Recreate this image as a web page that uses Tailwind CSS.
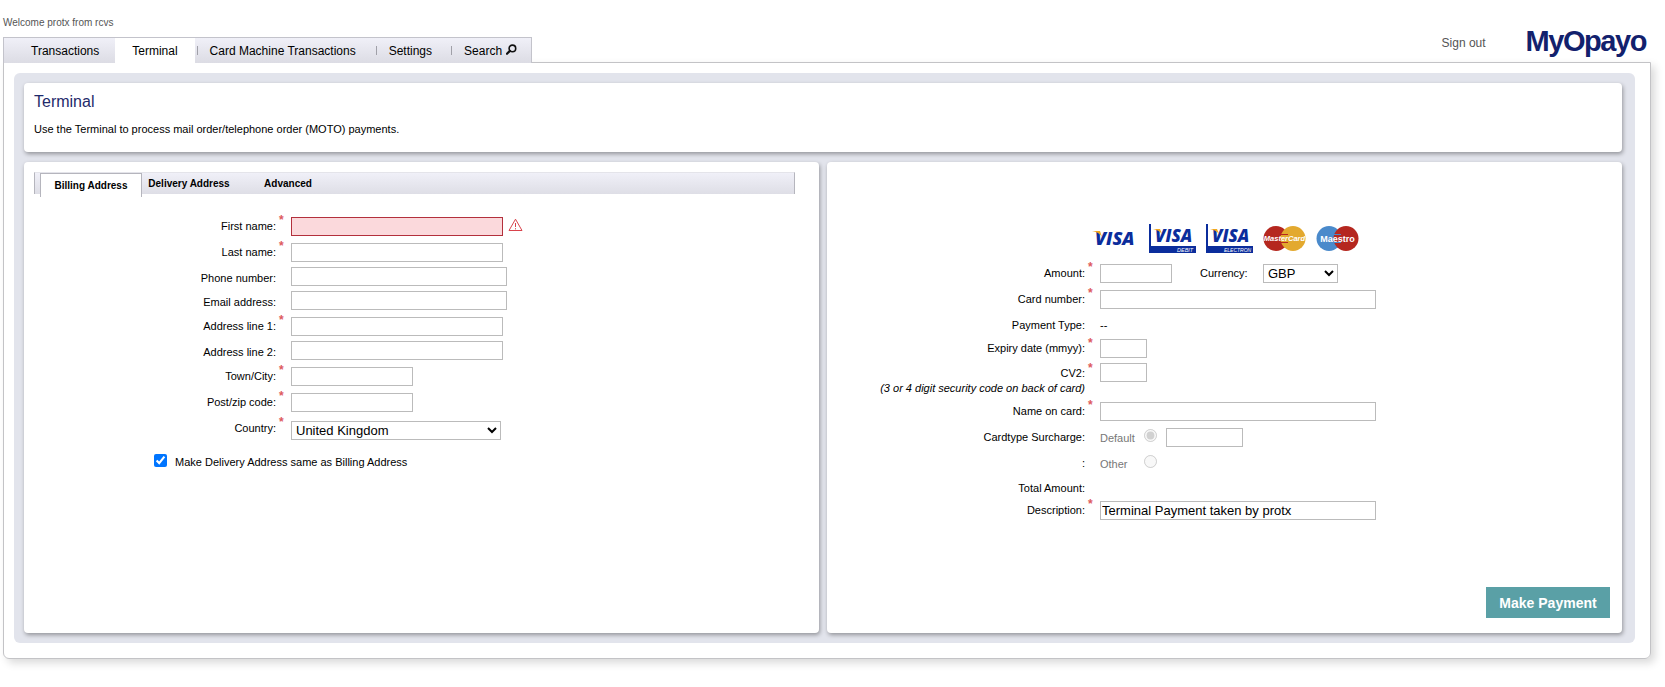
<!DOCTYPE html>
<html lang="en">
  <head>
    <meta charset="UTF-8" />
    <meta name="viewport" content="width=device-width, initial-scale=1.0" />
    <title>MyOpayo - Terminal</title>
    <script src="https://cdn.jsdelivr.net/npm/@tailwindcss/browser@4"></script>
  </head>
  <body class="bg-white pl-[3px] pr-[14px] pb-7 font-['Liberation_Sans',Arial,sans-serif] text-[11px] leading-4 text-black">
    <!-- Header -->
    <header class="relative -mb-px flex items-end justify-between">
      <div>
        <p class="pt-[15px] pb-[7px] text-[10px] leading-[15px] text-[#555]">Welcome protx from rcvs</p>
        <nav class="flex h-[26px] items-center border border-b-0 border-[#c3c3cb] bg-linear-to-b from-[#f0f0f8] to-[#dcdce4] text-[12px]">
          <a href="#" class="pl-[27px] pr-4">Transactions</a>
          <a href="#" class="flex h-full items-center bg-white px-[17px]">Terminal</a>
          <span class="ml-[2px] h-[9px] w-px bg-[#a0a0a8]"></span>
          <a href="#" class="pl-3 pr-5">Card Machine Transactions</a>
          <span class="h-[9px] w-px bg-[#a0a0a8]"></span>
          <a href="#" class="pl-3 pr-[19px]">Settings</a>
          <span class="h-[9px] w-px bg-[#a0a0a8]"></span>
          <a href="#" class="flex items-center gap-1 pl-3 pr-[14px]">
            Search
            <svg class="mb-[3px] size-[11px]" viewBox="0 0 11 11" fill="none" stroke="#111" stroke-width="1.6" stroke-linecap="round">
              <circle cx="6.4" cy="4.4" r="3.3" />
              <path d="M3.9 6.9 1 9.8" stroke-width="2.2" />
            </svg>
          </a>
        </nav>
      </div>
      <div class="flex items-center pr-[5px] pb-[6px]">
        <a href="#" class="pt-1 text-[12px] text-[#555]">Sign out</a>
        <span class="ml-10 text-[29px] leading-8 font-bold tracking-tighter text-[#12216d]">MyOpayo</span>
      </div>
    </header>

    <main class="rounded-b-md border border-[#c3c3c6] pt-[10px] pr-[15px] pb-[15px] pl-[10px] shadow-[4px_4px_8px_rgba(0,0,0,0.15)]">
      <div class="rounded-md bg-[#e2e4ec] pt-[10px] pr-[13px] pb-[10px] pl-[10px]">
        <section class="h-[69px] rounded-sm bg-white px-[10px] pt-[9px] shadow-[1px_2px_4px_rgba(0,0,0,0.35)]">
          <h1 class="text-[16px] leading-5 text-[#1f2a6b]">Terminal</h1>
          <p class="mt-[9px]">Use the Terminal to process mail order/telephone order (MOTO) payments.</p>
        </section>

        <div class="mt-[10px] grid grid-cols-2 gap-2">
          <!-- Billing address -->
          <section class="min-h-[471px] rounded-sm bg-white px-[10px] pt-[10px] shadow-[1px_2px_4px_rgba(0,0,0,0.35)]">
            <div class="mr-[14px] flex h-[22px] items-start border-x border-t border-x-[#b5b5bd] border-t-[#e4e4ea] bg-linear-to-b from-[#f0f0f8] to-[#dedee6] pl-[5px] text-[10px] font-bold">
              <button type="button" class="h-6 w-[102px] shrink-0 border border-b-0 border-[#b5b5bd] bg-white">Billing Address</button>
              <button type="button" class="h-[22px] w-[94px]">Delivery Address</button>
              <button type="button" class="h-[22px] w-[104px]">Advanced</button>
            </div>

            <form class="mt-5">
              <div class="flex h-[26px]">
                <label for="first-name" class="w-[242px] pt-1 text-right">First name:</label>
                <span class="w-[15px] pl-[3px] text-[12px] leading-3 font-bold text-[#dd5a60]">*</span>
                <input id="first-name" type="text" class="mt-[3px] h-[19px] w-[212px] border border-[#b3303c] bg-[#fbd9dc] px-px text-[13px]" />
                <svg class="mt-1 ml-[5px] h-[14px] w-[15px]" viewBox="0 0 15 14" fill="none" stroke="#d9434c">
                  <path d="M7.5 1.2 14 12.5H1Z" />
                  <path d="M7.5 5v4M7.5 10.2v1.2" />
                </svg>
              </div>
              <div class="flex h-[26px]">
                <label for="last-name" class="w-[242px] pt-1 text-right">Last name:</label>
                <span class="w-[15px] pl-[3px] text-[12px] leading-3 font-bold text-[#dd5a60]">*</span>
                <input id="last-name" type="text" class="mt-[3px] h-[19px] w-[212px] border border-[#bbb] px-px text-[13px]" />
              </div>
              <div class="flex h-6">
                <label for="phone" class="mr-[15px] w-[242px] pt-1 text-right">Phone number:</label>
                <input id="phone" type="text" class="mt-px h-[19px] w-[216px] border border-[#bbb] px-px text-[13px]" />
              </div>
              <div class="flex h-6">
                <label for="email" class="mr-[15px] w-[242px] pt-1 text-right">Email address:</label>
                <input id="email" type="text" class="mt-px h-[19px] w-[216px] border border-[#bbb] px-px text-[13px]" />
              </div>
              <div class="flex h-[26px]">
                <label for="address1" class="w-[242px] pt-1 text-right">Address line 1:</label>
                <span class="w-[15px] pl-[3px] text-[12px] leading-3 font-bold text-[#dd5a60]">*</span>
                <input id="address1" type="text" class="mt-[3px] h-[19px] w-[212px] border border-[#bbb] px-px text-[13px]" />
              </div>
              <div class="flex h-6">
                <label for="address2" class="mr-[15px] w-[242px] pt-1 text-right">Address line 2:</label>
                <input id="address2" type="text" class="mt-px h-[19px] w-[212px] border border-[#bbb] px-px text-[13px]" />
              </div>
              <div class="flex h-[26px]">
                <label for="town" class="w-[242px] pt-1 text-right">Town/City:</label>
                <span class="w-[15px] pl-[3px] text-[12px] leading-3 font-bold text-[#dd5a60]">*</span>
                <input id="town" type="text" class="mt-[3px] h-[19px] w-[122px] border border-[#bbb] px-px text-[13px]" />
              </div>
              <div class="flex h-[26px]">
                <label for="postcode" class="w-[242px] pt-1 text-right">Post/zip code:</label>
                <span class="w-[15px] pl-[3px] text-[12px] leading-3 font-bold text-[#dd5a60]">*</span>
                <input id="postcode" type="text" class="mt-[3px] h-[19px] w-[122px] border border-[#bbb] px-px text-[13px]" />
              </div>
              <div class="flex h-[26px]">
                <label for="country" class="w-[242px] pt-1 text-right">Country:</label>
                <span class="w-[15px] pl-[3px] text-[12px] leading-3 font-bold text-[#dd5a60]">*</span>
                <select id="country" class="mt-[5px] h-[19px] w-[210px] border border-[#bbb] text-[13px]">
                  <option>United Kingdom</option>
                </select>
              </div>
              <div class="mt-3 ml-[120px] flex items-start gap-2">
                <input id="same-address" type="checkbox" checked class="size-[13px]" />
                <label for="same-address">Make Delivery Address same as Billing Address</label>
              </div>
            </form>
          </section>

          <!-- Payment details -->
          <form class="flex flex-col rounded-sm bg-white pt-[62px] pr-3 pb-[15px] pl-[10px] shadow-[1px_2px_4px_rgba(0,0,0,0.35)]">
            <div class="ml-[254px] flex h-[37px] items-start gap-[10px]">
              <svg class="h-[29px] w-[48px]" viewBox="0 0 48 29">
                <text x="4" y="21" font-family="Open Sans" font-size="18" font-weight="800" font-style="italic" fill="#0b2d9c">VISA</text>
                <path d="M1 7h8l2 6Q8 8 1 7Z" fill="#f3a81c" />
              </svg>
              <svg class="h-[29px] w-[47px]" viewBox="0 0 47 29">
                <path d="M0 0h2v22h45v7H0Z" fill="#0b2d9c" />
                <text x="6" y="18" font-family="Open Sans" font-size="17" font-weight="800" font-style="italic" fill="#0b2d9c">VISA</text>
                <path d="M4 5h7l2 5Q10 6 4 5Z" fill="#f3a81c" />
                <text x="28" y="27.500" font-family="Liberation Sans" font-size="5.500" font-style="italic" fill="#fff">DEBIT</text>
              </svg>
              <svg class="h-[29px] w-[47px]" viewBox="0 0 47 29">
                <path d="M0 0h2v22h45v7H0Z" fill="#0b2d9c" />
                <text x="6" y="18" font-family="Open Sans" font-size="17" font-weight="800" font-style="italic" fill="#0b2d9c">VISA</text>
                <path d="M4 5h7l2 5Q10 6 4 5Z" fill="#f3a81c" />
                <text x="18" y="27.500" font-family="Liberation Sans" font-size="5" font-style="italic" fill="#fff">ELECTRON</text>
              </svg>
              <svg class="mt-[2px] h-[25px] w-[43px]" viewBox="0 0 43 25">
                <circle cx="13" cy="12.500" r="12.500" fill="#b5271f" />
                <circle cx="30" cy="12.500" r="12.500" fill="#e3a92f" />
                <path d="M18 8.500h7M18 16.500h7" stroke="#b5271f" />
                <text x="21.500" y="15" text-anchor="middle" font-family="Liberation Sans" font-size="7.500" font-weight="700" font-style="italic" fill="#fff">MasterCard</text>
              </svg>
              <svg class="mt-[2px] h-[25px] w-[43px]" viewBox="0 0 43 25">
                <circle cx="13" cy="12.500" r="12.500" fill="#4a8acb" />
                <circle cx="30" cy="12.500" r="12.500" fill="#b5271f" />
                <path d="M18 8.500h7M18 16.500h7" stroke="#4a8acb" />
                <text x="21.500" y="15.500" text-anchor="middle" font-family="Liberation Sans" font-size="9" font-weight="700" fill="#fff">Maestro</text>
              </svg>
            </div>

            <div class="flex h-[26px]">
              <label for="amount" class="w-[248px] pt-1 text-right">Amount:</label>
              <span class="w-[15px] pl-[3px] text-[12px] leading-3 font-bold text-[#dd5a60]">*</span>
              <input id="amount" type="text" class="mt-[3px] h-[19px] w-[72px] border border-[#bbb] px-px text-[13px]" />
              <label for="currency" class="ml-7 w-[48px] pt-1">Currency:</label>
              <select id="currency" class="mt-[3px] ml-[15px] h-[19px] w-[75px] border border-[#bbb] text-[13px]">
                <option>GBP</option>
              </select>
            </div>
            <div class="flex h-[26px]">
              <label for="card-number" class="w-[248px] pt-1 text-right">Card number:</label>
              <span class="w-[15px] pl-[3px] text-[12px] leading-3 font-bold text-[#dd5a60]">*</span>
              <input id="card-number" type="text" class="mt-[3px] h-[19px] w-[276px] border border-[#bbb] px-px text-[13px]" />
            </div>
            <div class="flex h-6 pt-1">
              <span class="mr-[15px] w-[248px] text-right">Payment Type:</span>
              <span>--</span>
            </div>
            <div class="flex h-[25px]">
              <label for="expiry" class="w-[248px] pt-[3px] text-right">Expiry date (mmyy):</label>
              <span class="w-[15px] pl-[3px] text-[12px] leading-3 font-bold text-[#dd5a60]">*</span>
              <input id="expiry" type="text" class="mt-[2px] h-[19px] w-[47px] border border-[#bbb] px-px text-[13px]" />
            </div>
            <div class="flex h-[37px]">
              <label for="cv2" class="w-[248px] pt-1 text-right leading-[15px]">CV2:<br /><i>(3 or 4 digit security code on back of card)</i></label>
              <span class="w-[15px] pl-[3px] text-[12px] leading-3 font-bold text-[#dd5a60]">*</span>
              <input id="cv2" type="text" class="mt-px h-[19px] w-[47px] border border-[#bbb] px-px text-[13px]" />
            </div>
            <div class="flex h-[26px]">
              <label for="card-name" class="w-[248px] pt-1 text-right">Name on card:</label>
              <span class="w-[15px] pl-[3px] text-[12px] leading-3 font-bold text-[#dd5a60]">*</span>
              <input id="card-name" type="text" class="mt-[3px] h-[19px] w-[276px] border border-[#bbb] px-px text-[13px]" />
            </div>
            <div class="flex h-[26px]">
              <span class="mr-[15px] w-[248px] pt-1 text-right">Cardtype Surcharge:</span>
              <label for="surcharge-default" class="w-[44px] pt-[5px] text-[#777]">Default</label>
              <input id="surcharge-default" name="surcharge" type="radio" checked disabled class="mt-1 size-[13px]" />
              <input type="text" aria-label="Surcharge amount" class="mt-[3px] ml-[9px] h-[19px] w-[77px] border border-[#bbb] px-px text-[13px]" />
            </div>
            <div class="flex h-[25px]">
              <span class="mr-[15px] w-[248px] pt-1 text-right">:</span>
              <label for="surcharge-other" class="w-[44px] pt-[5px] text-[#777]">Other</label>
              <input id="surcharge-other" name="surcharge" type="radio" disabled class="mt-1 size-[13px]" />
            </div>
            <div class="flex h-[22px] pt-1">
              <span class="w-[248px] text-right">Total Amount:</span>
            </div>
            <div class="flex h-[26px]">
              <label for="description" class="w-[248px] pt-1 text-right">Description:</label>
              <span class="w-[15px] pl-[3px] text-[12px] leading-3 font-bold text-[#dd5a60]">*</span>
              <input id="description" type="text" value="Terminal Payment taken by protx" class="mt-[3px] h-[19px] w-[276px] border border-[#bbb] px-px text-[13px]" />
            </div>

            <button type="submit" class="mt-auto h-[31px] w-[124px] self-end bg-[#5aa0a6] text-[14px] font-bold text-white">Make Payment</button>
          </form>
        </div>
      </div>
    </main>
  </body>
</html>
